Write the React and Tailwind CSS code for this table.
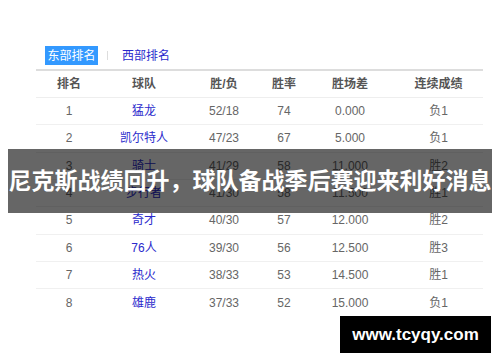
import React from "react";

const ROWS = [
  ["1", "猛龙", "52/18", "74", "0.000", "负1"],
  ["2", "凯尔特人", "47/23", "67", "5.000", "负1"],
  ["3", "骑士", "41/29", "58", "11.000", "胜2"],
  ["4", "步行者", "41/30", "58", "11.500", "胜1"],
  ["5", "奇才", "40/30", "57", "12.000", "胜2"],
  ["6", "76人", "39/30", "56", "12.500", "胜3"],
  ["7", "热火", "38/33", "53", "14.500", "胜1"],
  ["8", "雄鹿", "37/33", "52", "15.000", "负1"],
];

const HEAD = ["排名", "球队", "胜/负", "胜率", "胜场差", "连续成绩"];

const GRID = "grid grid-cols-[66px_84px_76px_44px_88px_89px] items-center text-center";

const App = () => {
  return (
    <div
      className="relative h-[362px] w-[500px] overflow-hidden bg-white"
      style={{ fontFamily: '"Liberation Sans", "Noto Sans CJK SC", sans-serif' }}
    >
      <div className="pl-[36px] pt-[46px]">
        <div className="ml-[9px] flex h-[19px] items-center text-[12px]">
          <span className="flex h-[19px] w-[53px] items-center justify-center bg-[#3399ff] text-white">
            东部排名
          </span>
          <span className="ml-[9px] h-[9px] w-px bg-[#dddddd]" />
          <span className="ml-[14px] text-[#2a2acc]">西部排名</span>
        </div>

        <div className="mt-[4px] w-[447px] border-t-2 border-[#dddddd]">
          <div className={`${GRID} h-[27px] border-b border-[#eeeeee] text-[12px] font-bold text-[#555555]`}>
            {HEAD.map((h) => (
              <span key={h}>{h}</span>
            ))}
          </div>
          {ROWS.map((row, i) => (
            <div
              key={row[0]}
              className={`${GRID} h-[27.33px] text-[12px] text-[#666666] ${
                i < ROWS.length - 1 ? "border-b border-[#f0f0f0]" : ""
              }`}
            >
              <span>{row[0]}</span>
              <span className="text-[#2a2acc]">{row[1]}</span>
              <span>{row[2]}</span>
              <span>{row[3]}</span>
              <span>{row[4]}</span>
              <span>{row[5]}</span>
            </div>
          ))}
        </div>
      </div>

      <div className="absolute left-[8px] top-[149px] flex h-[64px] w-[484px] items-center justify-center bg-black/60">
        <span className="whitespace-nowrap text-[23px] font-bold text-white">
          尼克斯战绩回升，球队备战季后赛迎来利好消息
        </span>
      </div>

      <div className="absolute left-[340px] top-[316px] flex h-[37px] w-[151px] items-center justify-center bg-black">
        <span className="text-[17px] font-bold text-white">www.tcyqy.com</span>
      </div>
    </div>
  );
};

export default App;
